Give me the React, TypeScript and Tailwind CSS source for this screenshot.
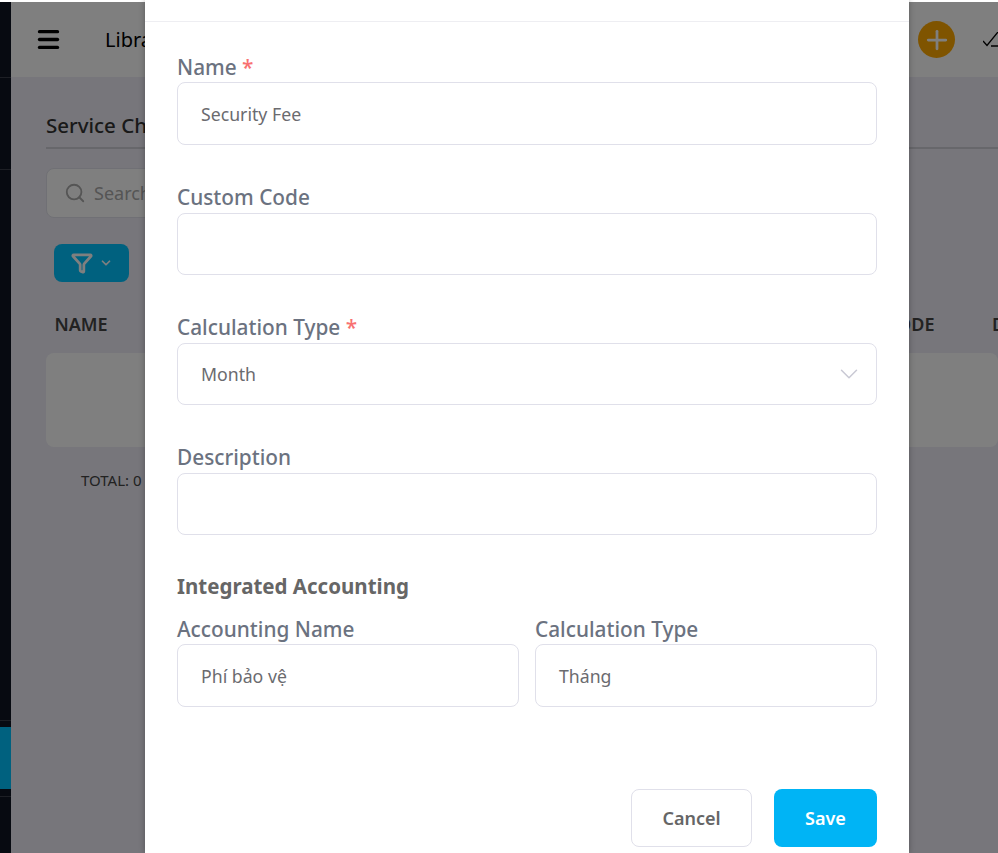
import React from 'react';
import { ChevronDown, Filter, Menu, Plus, Search } from 'lucide-react';

const font = { fontFamily: '"Noto Sans", sans-serif' };

const Field: React.FC<{ label: string; value?: string; required?: boolean; select?: boolean; tall?: boolean }> = ({ label, value, required, select, tall }) => (
  <div className="flex-1 min-w-0">
    <label className={`block text-[20.8px] font-medium text-[#6b7280] ${tall ? 'leading-[27px] pb-[1px]' : 'leading-[25px] pb-[3px]'}`}>
      {label} {required && <span className="text-[#f87171]">*</span>}
    </label>
    <div className={`flex items-center justify-between px-[23px] bg-white border border-[#e0e0ea] rounded-lg text-[17.7px] text-[#6b6b6f] ${tall ? 'h-[63px] pt-[2px]' : 'h-[62px]'}`}>
      <span>{value}</span>
      {select && <ChevronDown className="w-[30px] h-[30px] -mr-[11px] text-[#c9c9d4]" strokeWidth={1.2} />}
    </div>
  </div>
);

export default function App() {
  return (
    <div className="relative h-[853px] w-[998px] overflow-hidden bg-white pt-[2px]" style={font}>
      {/* page behind the modal */}
      <div className="flex h-full bg-[#eeedf6]">
        <aside className="w-[11px] shrink-0 bg-[#0e1422] flex flex-col">
          <div className="h-[76px] border-b border-[#3a3f4a]" />
          <div className="h-[92px] border-b border-[#3a3f4a]" />
          <div className="h-[551px] border-b border-[#3a3f4a]" />
          <div className="h-[62px] mt-[6px] bg-[#00c3ff]" />
          <div className="h-[8px] border-b border-[#3a3f4a]" />
        </aside>
        <main className="flex-1 min-w-0">
          <header className="h-[75px] bg-white flex items-center pl-[24px]">
            <Menu className="w-[27px] h-[27px] text-black" strokeWidth={3} />
            <span className="ml-[43px] text-[20px] text-black">Library</span>
            <button className="ml-auto w-[37px] h-[37px] rounded-full bg-[#ffa900] flex items-center justify-center">
              <Plus className="w-[30px] h-[30px] text-white" strokeWidth={2.2} />
            </button>
            <svg className="ml-[28px] -mr-[5px] shrink-0 w-[20px] h-[16px]" viewBox="0 0 20 16" fill="none" stroke="black" strokeWidth="1.4">
              <path d="M0 9l4 4.5L15 0M8 14h12" />
            </svg>
          </header>
          <div className="pl-[35px] pt-[30px]">
            <div className="border-b-2 border-[#cfcfd6] h-[42px] text-[20.5px] leading-[36px] font-medium text-[#333]">Service Charges</div>
            <div className="mt-[19px] h-[50px] w-[400px] flex items-center gap-[8px] px-[17px] bg-white border border-[#e0e0ea] rounded-lg text-[18px] text-[#aaa]">
              <Search className="w-[22px] h-[22px]" />
              Search
            </div>
            <button className="mt-[26px] ml-[8px] w-[75px] h-[38px] rounded-lg bg-[#00c3ff] flex items-center justify-center gap-[6px] text-white">
              <Filter className="w-[22px] h-[22px]" strokeWidth={3} />
              <ChevronDown className="w-[14px] h-[14px]" strokeWidth={3} />
            </button>
            <div className="relative mt-[30px] h-[24px] pl-[8.5px] text-[18px] font-semibold leading-[24px] text-[#444]">
              NAME
              <span className="absolute left-[840px] top-0">CODE</span>
              <span className="absolute left-[946px] top-0">DESCRIPTION</span>
            </div>
            <div className="mt-[17px] h-[94px] rounded-lg bg-white" />
            <div className="mt-[22px] pl-[35px] text-[15px] text-[#444]">TOTAL: 0</div>
          </div>
        </main>
      </div>
      <div className="absolute inset-0 top-[2px] bg-black/50" />

      {/* modal */}
      <div className="absolute left-[145px] top-0 bottom-0 w-[764px] bg-white shadow-[0_0_6px_rgba(0,0,0,0.3)]">
        <div className="h-[22px] border-b border-[#eeeef2]" />
        <div className="px-[32px] pt-[32px] flex flex-col">
          <Field label="Name" value="Security Fee" required tall />
          <div className="mt-[40px]"><Field label="Custom Code" /></div>
          <div className="mt-[40px]"><Field label="Calculation Type" value="Month" required select /></div>
          <div className="mt-[40px]"><Field label="Description" /></div>
          <div className="mt-[37px] text-[20.5px] leading-[28px] font-bold text-[#666]">Integrated Accounting</div>
          <div className="mt-[16px] flex gap-[16px]">
            <Field label="Accounting Name" value="Phí bảo vệ" tall />
            <Field label="Calculation Type" value="Tháng" tall />
          </div>
          <div className="mt-[82px] flex justify-end gap-[22px]">
            <button className="w-[121px] h-[58px] bg-white border border-[#e0e0ea] rounded-lg text-[18px] font-semibold text-[#666]">Cancel</button>
            <button className="w-[103px] h-[58px] bg-[#00b4f5] rounded-lg text-[18px] font-semibold text-white">Save</button>
          </div>
        </div>
      </div>
    </div>
  );
}
